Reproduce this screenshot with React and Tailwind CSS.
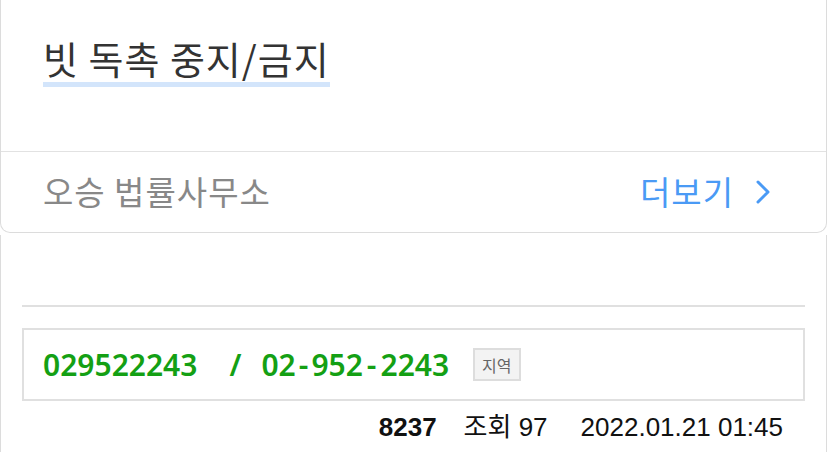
import React from "react";

const kr = { fontFamily: '"Noto Sans CJK KR", "Noto Sans", sans-serif' };
const meta = { fontFamily: '"Liberation Sans", "Noto Sans CJK KR", sans-serif' };

export default function App() {
  return (
    <div className="w-[827px] h-[452px] overflow-hidden bg-white flex flex-col" style={kr}>
      <div className="border-x border-b border-[#dcdcdc] rounded-b-[10px]">
        <div className="h-[152px] pl-[42px] pt-[34px] border-b border-[#e2e2e2]">
          <span className="inline-block text-[38px] leading-[48px] tracking-[1px] text-[#333] border-b-[5px] border-[#d3e5fb]">
            빗 독촉 중지/금지
          </span>
        </div>
        <div className="h-[80px] flex items-center justify-between pl-[42px] pr-[54px]">
          <span className="text-[33px] text-[#888] tracking-[1px]">오승 법률사무소</span>
          <span className="flex items-center gap-[20px] text-[33px] tracking-[1px] text-[#4a9af5]">
            더보기
            <svg width="18" height="26" viewBox="0 0 18 26" fill="none">
              <path d="M4 3 L14 13 L4 23" stroke="#4a9af5" strokeWidth="3" strokeLinecap="round" strokeLinejoin="round" />
            </svg>
          </span>
        </div>
      </div>

      <div className="flex-1 mt-[2px] border-x border-[#dcdcdc] px-[21px] pt-[70px]">
        <div className="h-[2px] bg-[#e0e0e0]" />
        <div className="mt-[21px] h-[73px] border-2 border-[#e0e0e0] flex items-center pl-[19px]">
          <span
            className="text-[30px] font-semibold text-[#14a014]"
            style={{ fontFamily: '"Noto Sans", "Open Sans", sans-serif' }}
          >
            029522243<span className="ml-[32px] mr-[20px]">/</span>02<span className="mx-[3px]">-</span>952<span className="mx-[4px]">-</span>2243
          </span>
          <span className="ml-[24px] h-[33px] px-[7px] flex items-center border-2 border-[#dddddd] bg-[#f3f3f3] text-[16px] text-[#666]">
            지역
          </span>
        </div>
        <div className="flex justify-end items-center pr-[22px] pt-[10px] text-[26px] leading-[32px] text-[#111]" style={meta}>
          <span className="font-bold mr-[27px]">8237</span>
          <span className="mr-[33px]">조회 97</span>
          <span>2022.01.21 01:45</span>
        </div>
      </div>
    </div>
  );
}
